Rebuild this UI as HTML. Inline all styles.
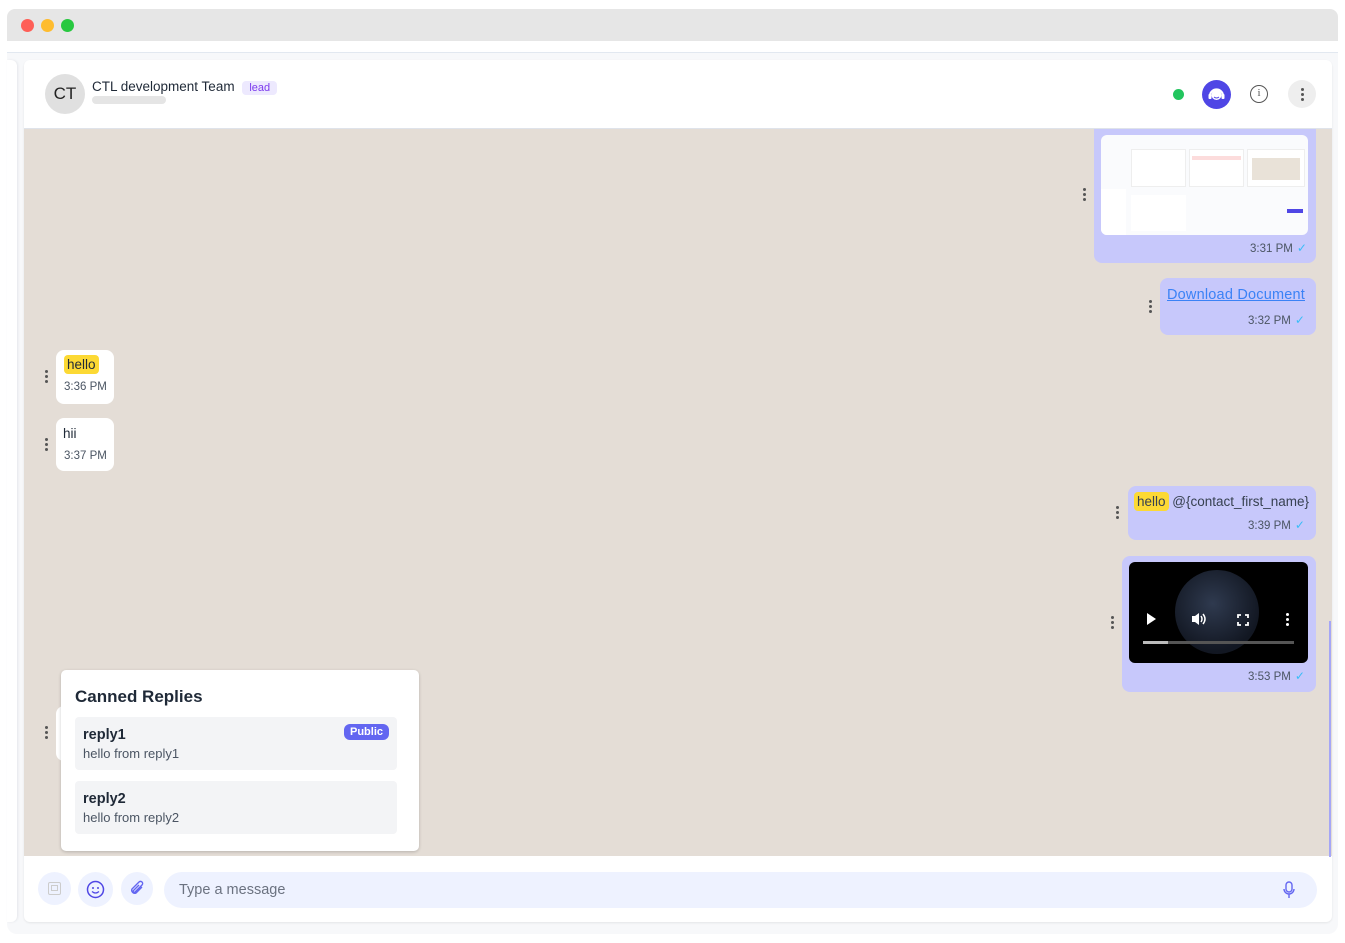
<!DOCTYPE html>
<html><head><meta charset="utf-8"><style>
*{box-sizing:border-box;margin:0;padding:0}
body{width:1345px;height:943px;background:#fff;font-family:"Liberation Sans",sans-serif;position:relative;overflow:hidden;color:#1f2937}
.abs{position:absolute}
.bar{left:7px;top:9px;width:1331px;height:32px;background:#e6e6e6;border-radius:8px 8px 0 0}
.dot{width:13px;height:13px;border-radius:50%;top:19px}
.frame{left:7px;top:52px;width:1331px;height:882px;background:#f7f8fa;border-top:1px solid #e2e8f0;border-radius:0 0 10px 10px}
.lstrip{left:7px;top:60px;width:10px;height:862px;background:#fff;border-radius:0 6px 6px 0;box-shadow:1px 0 2px #e5e7eb}
.card{left:24px;top:60px;width:1308px;height:862px;background:#fff;border-radius:6px;box-shadow:0 1px 2px rgba(0,0,0,.08);overflow:hidden}
.chat{left:0;top:68px;width:1308px;height:728px;background:#e4ddd6;border-top:1px solid #dfe3ea}
.bub{position:absolute;border-radius:8px;font-size:13px}
.me{background:#c7c8fb}
.them{background:#fff}
.t{font-size:11.5px;color:#4b5563}
.hl{background:#fcd934;border-radius:4px;padding:2px 3px}
.kebab{position:absolute;width:3px}
.kebab i{display:block;width:3px;height:3px;border-radius:50%;background:#555;margin-bottom:2px}
.chk{color:#38bdf8;font-size:12px;margin-left:4px}
</style></head><body>
<div class="abs bar"></div>
<div class="abs dot" style="left:21px;background:#fe5f57"></div>
<div class="abs dot" style="left:41px;background:#febc2e"></div>
<div class="abs dot" style="left:61px;background:#28c840"></div>
<div class="abs frame"></div>
<div class="abs lstrip"></div>
<div class="abs card">
  <div class="abs" style="left:21px;top:14px;width:40px;height:40px;border-radius:50%;background:#e0e0e0;font-size:17px;line-height:40px;text-align:center;color:#222">CT</div>
  <div class="abs" style="left:68px;top:19px;font-size:13.5px;color:#1f2937">CTL development Team <span style="background:#ede9fe;color:#7c3aed;font-size:11px;padding:1px 7px;border-radius:4px;margin-left:4px">lead</span></div>
  <div class="abs" style="left:68px;top:36px;width:74px;height:8px;background:#e5e5e5;border-radius:4px"></div>
  <div class="abs" style="left:1149px;top:29px;width:11px;height:11px;border-radius:50%;background:#22c55e"></div>
  <div class="abs" style="left:1178px;top:20px;width:29px;height:29px;border-radius:50%;background:#4f46e5">
    <svg width="29" height="29" viewBox="0 0 29 29"><path d="M8 16a6.5 6.5 0 0 1 13 0" stroke="#fff" stroke-width="2.2" fill="none"/><circle cx="14.5" cy="15" r="5" fill="#fff"/><path d="M12 17q2.5 2 5 0" stroke="#4f46e5" fill="none"/><rect x="6.5" y="14" width="3" height="5" rx="1" fill="#fff"/><rect x="19.5" y="14" width="3" height="5" rx="1" fill="#fff"/></svg>
  </div>
  <div class="abs" style="left:1226px;top:25px;width:18px;height:18px;border:1.5px solid #555;border-radius:50%;font-size:11px;text-align:center;line-height:15px;color:#555;font-family:'Liberation Serif',serif">i</div>
  <div class="abs" style="left:1264px;top:20px;width:28px;height:28px;border-radius:50%;background:#eee"><div class="kebab" style="left:13px;top:8px"><i></i><i></i><i></i></div></div>

  <div class="abs chat">
    <div class="bub me" style="left:1070px;top:0;width:222px;height:134px;border-radius:0 0 8px 8px"></div>
    <div class="abs" style="left:1077px;top:6px;width:207px;height:100px;background:#fafbfd;border-radius:6px;overflow:hidden">
      <div class="abs" style="left:0;top:54px;width:25px;height:46px;background:#fff"></div>
      <div class="abs" style="left:30px;top:14px;width:55px;height:38px;background:#fff;border:1px solid #eee"></div>
      <div class="abs" style="left:88px;top:14px;width:55px;height:38px;background:#fff;border:1px solid #eee"><div style="margin:6px 2px;height:4px;background:#fcdcdc"></div></div>
      <div class="abs" style="left:146px;top:14px;width:58px;height:38px;background:#fff;border:1px solid #eee"><div style="margin:8px 4px;height:22px;background:#e9e2d8"></div></div>
      <div class="abs" style="left:30px;top:60px;width:55px;height:36px;background:#fff"></div>
      <div class="abs" style="left:186px;top:74px;width:16px;height:4px;background:#4f46e5"></div>
    </div>
    <div class="abs t" style="left:1226px;top:112px">3:31 PM<span class="chk">✓</span></div>
    <div class="kebab" style="left:1059px;top:59px"><i></i><i></i><i></i></div>

    <div class="bub me" style="left:1136px;top:149px;width:156px;height:57px"></div>
    <div class="abs" style="left:1143px;top:158px;font-size:14.5px;color:#3b82f6;text-decoration:underline;letter-spacing:0.2px">Download Document</div>
    <div class="abs t" style="left:1224px;top:184px">3:32 PM<span class="chk">✓</span></div>
    <div class="kebab" style="left:1125px;top:171px"><i></i><i></i><i></i></div>

    <div class="bub them" style="left:32px;top:221px;width:58px;height:54px"></div>
    <div class="abs" style="left:40px;top:228px;font-size:13.5px"><span class="hl">hello</span></div>
    <div class="abs t" style="left:40px;top:252px">3:36 PM</div>
    <div class="kebab" style="left:21px;top:241px"><i></i><i></i><i></i></div>

    <div class="bub them" style="left:32px;top:289px;width:58px;height:53px"></div>
    <div class="abs" style="left:39px;top:297px;font-size:13.5px">hii</div>
    <div class="abs t" style="left:40px;top:321px">3:37 PM</div>
    <div class="kebab" style="left:21px;top:309px"><i></i><i></i><i></i></div>

    <div class="bub me" style="left:1104px;top:357px;width:188px;height:54px"></div>
    <div class="abs" style="left:1110px;top:365px;font-size:13.5px;color:#374151"><span class="hl">hello</span> @{contact_first_name}</div>
    <div class="abs t" style="left:1224px;top:389px">3:39 PM<span class="chk">✓</span></div>
    <div class="kebab" style="left:1092px;top:377px"><i></i><i></i><i></i></div>

    <div class="bub me" style="left:1098px;top:427px;width:194px;height:136px"></div>
    <div class="abs" style="left:1105px;top:433px;width:179px;height:101px;background:#000;border-radius:6px;overflow:hidden">
      <div class="abs" style="left:46px;top:8px;width:84px;height:84px;border-radius:50%;background:radial-gradient(circle at 45% 40%,#2f3a4f,#121722 70%)"></div>
      <div class="abs" style="left:18px;top:51px;width:0;height:0;border-left:9px solid #fff;border-top:6px solid transparent;border-bottom:6px solid transparent"></div>
      <svg class="abs" style="left:62px;top:50px" width="16" height="14" viewBox="0 0 16 14"><path d="M1 4h3l4-3v12l-4-3H1z" fill="#fff"/><path d="M10 4q2 3 0 6M12 2q4 5 0 10" stroke="#fff" stroke-width="1.5" fill="none"/></svg>
      <svg class="abs" style="left:108px;top:52px" width="12" height="12" viewBox="0 0 12 12"><path d="M1 4V1h3M8 1h3v3M11 8v3H8M4 11H1V8" stroke="#fff" stroke-width="1.8" fill="none"/></svg>
      <div class="kebab" style="left:157px;top:51px"><i style="background:#fff"></i><i style="background:#fff"></i><i style="background:#fff"></i></div>
      <div class="abs" style="left:14px;top:79px;width:151px;height:3px;background:#555"><div style="width:25px;height:3px;background:#bbb"></div></div>
    </div>
    <div class="abs t" style="left:1224px;top:540px">3:53 PM<span class="chk">✓</span></div>
    <div class="kebab" style="left:1087px;top:487px"><i></i><i></i><i></i></div>
    <div class="abs" style="left:1305px;top:492px;width:2px;height:236px;background:#a5a6f6"></div>

    <div class="bub them" style="left:32px;top:577px;width:20px;height:55px"></div>
    <div class="kebab" style="left:21px;top:597px"><i></i><i></i><i></i></div>
    <div class="abs" style="left:37px;top:541px;width:358px;height:181px;background:#fff;border-radius:5px;box-shadow:0 1px 3px rgba(0,0,0,.2)">
      <div class="abs" style="left:14px;top:17px;font-size:17px;font-weight:bold;color:#1f2937">Canned Replies</div>
      <div class="abs" style="left:14px;top:47px;width:322px;height:53px;background:#f3f4f6;border-radius:4px">
        <div class="abs" style="left:8px;top:10px;font-size:14.5px;font-weight:bold">reply1</div>
        <div class="abs" style="left:8px;top:29px;font-size:13px;color:#4b5563">hello from reply1</div>
        <div class="abs" style="left:269px;top:7px;background:#6366f1;color:#fff;font-size:11px;font-weight:bold;padding:2px 6px;border-radius:6px">Public</div>
      </div>
      <div class="abs" style="left:14px;top:111px;width:322px;height:53px;background:#f3f4f6;border-radius:4px">
        <div class="abs" style="left:8px;top:10px;font-size:14.5px;font-weight:bold">reply2</div>
        <div class="abs" style="left:8px;top:29px;font-size:13px;color:#4b5563">hello from reply2</div>
      </div>
    </div>
  </div>

  <div class="abs" style="left:14px;top:812px;width:33px;height:33px;border-radius:50%;background:#eef2ff"><div class="abs" style="left:10px;top:10px;width:13px;height:13px;border:1.5px solid #ccc;border-radius:2px"><div style="margin:2px;height:6px;border:1px solid #ccc"></div></div></div>
  <div class="abs" style="left:54px;top:812px;width:35px;height:35px;border-radius:50%;background:#eef2ff"><svg class="abs" style="left:8px;top:8px" width="19" height="19" viewBox="0 0 19 19"><circle cx="9.5" cy="9.5" r="8" stroke="#4f46e5" stroke-width="1.5" fill="none"/><circle cx="7" cy="8" r="1" fill="#4f46e5"/><circle cx="12" cy="8" r="1" fill="#4f46e5"/><path d="M6 11.5q3.5 3 7 0" stroke="#4f46e5" stroke-width="1.3" fill="none"/></svg></div>
  <div class="abs" style="left:97px;top:812px;width:32px;height:33px;border-radius:50%;background:#eef2ff"><svg class="abs" style="left:8px;top:8px" width="17" height="17" viewBox="0 0 17 17"><path d="M13 7l-6 6a3 3 0 0 1-4-4l7-7a2 2 0 0 1 3 3l-7 7a1 1 0 0 1-1.5-1.5L10 5" stroke="#6366f1" stroke-width="1.4" fill="none"/></svg></div>
  <div class="abs" style="left:140px;top:812px;width:1153px;height:36px;border-radius:18px;background:#eef2ff">
    <div class="abs" style="left:15px;top:10px;font-size:14.5px;color:#6b7280">Type a message</div>
    <svg class="abs" style="left:1118px;top:9px" width="14" height="18" viewBox="0 0 14 18"><rect x="4" y="1" width="6" height="10" rx="3" stroke="#6366f1" stroke-width="1.4" fill="none"/><path d="M2 8a5 5 0 0 0 10 0M7 13v4" stroke="#6366f1" stroke-width="1.4" fill="none"/></svg>
  </div>
</div>
</body></html>
